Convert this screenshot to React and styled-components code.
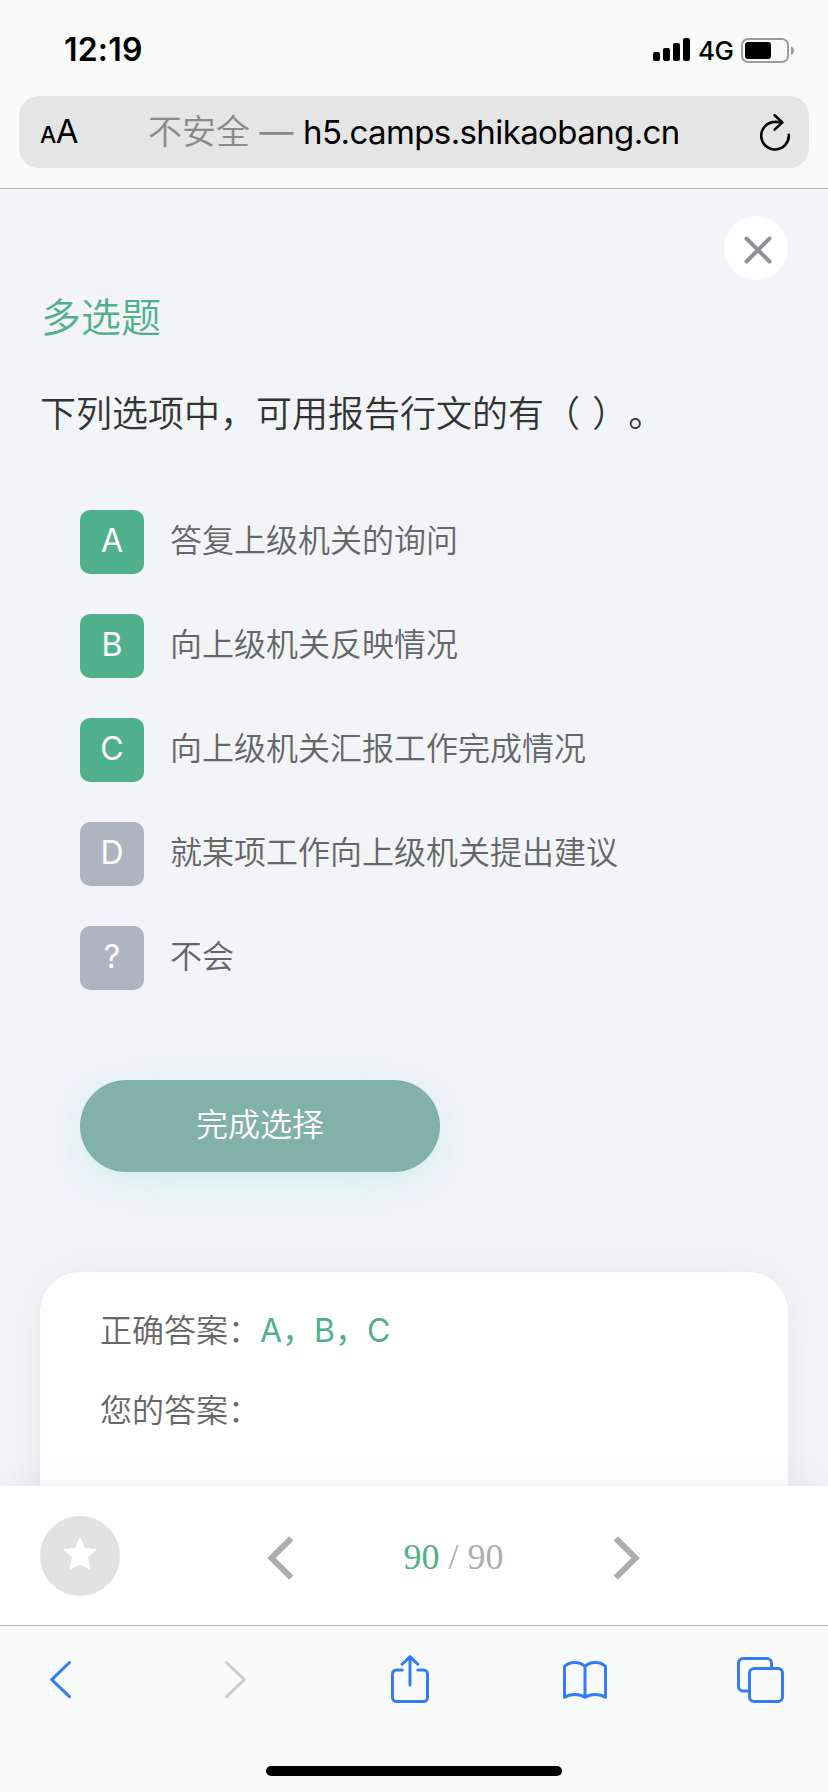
import React, { useState } from 'react'
import styled, { createGlobalStyle } from 'styled-components'

const green = '#51b08c'
const blue = '#347cf6'
const line = '#b0b1b2'

const OPTIONS = [
    { key: 'A', text: '答复上级机关的询问' },
    { key: 'B', text: '向上级机关反映情况' },
    { key: 'C', text: '向上级机关汇报工作完成情况' },
    { key: 'D', text: '就某项工作向上级机关提出建议' },
    { key: '?', text: '不会' },
]

const App = () => {
    const [selected, setSelected] = useState(['A', 'B', 'C'])

    const toggle = key =>
        setSelected(selected.includes(key) ? selected.filter(x => x !== key) : [...selected, key])

    return (
        <Screen>
            <GlobalStyle />
            <Header>
                <StatusBar>
                    <Clock>12:19</Clock>
                    <StatusIcons>
                        <Signal />
                        <Network>4G</Network>
                        <Battery />
                    </StatusIcons>
                </StatusBar>
                <AddressBar>
                    <TextSize><small>A</small>A</TextSize>
                    <Address>
                        <Insecure>不安全</Insecure>
                        <Dash>—</Dash>
                        <Domain>h5.camps.shikaobang.cn</Domain>
                    </Address>
                    <Reload />
                </AddressBar>
            </Header>

            <Content>
                <CloseButton aria-label="关闭">
                    <svg width="30" height="30" viewBox="0 0 30 30" fill="none" stroke="#8d9299" strokeWidth="4" strokeLinecap="round">
                        <path d="M3.5 3.5L26.5 26.5M26.5 3.5L3.5 26.5" />
                    </svg>
                </CloseButton>
                <Kind>多选题</Kind>
                <Question>下列选项中，可用报告行文的有（ ）。</Question>
                <Options>
                    {OPTIONS.map(x => (
                        <Option key={x.key} onClick={() => toggle(x.key)}>
                            <Letter $active={selected.includes(x.key)}>{x.key}</Letter>
                            <OptionText>{x.text}</OptionText>
                        </Option>
                    ))}
                </Options>
                <Submit>完成选择</Submit>
                <AnswerCard>
                    <Answer>正确答案：<b>A，B，C</b></Answer>
                    <Answer>您的答案：</Answer>
                </AnswerCard>
            </Content>

            <Pager>
                <Favorite aria-label="收藏">
                    <svg width="36" height="36" viewBox="0 0 36 36" fill="#fff" stroke="#fff" strokeWidth="1.6" strokeLinejoin="round">
                        <path d="M18 2.4L22.2 12.8L33.6 13.6L25 21L27.7 32.8L18 27.6L8.3 32.8L11 21L2.4 13.6L13.8 12.8Z" />
                    </svg>
                </Favorite>
                <Arrow aria-label="上一题"><PagerChevron d="M24.2 3.3L4.5 23L24.2 42.7" /></Arrow>
                <Counter><em>90</em> / 90</Counter>
                <Arrow aria-label="下一题"><PagerChevron d="M3.8 3.3L23.5 23L3.8 42.7" /></Arrow>
            </Pager>

            <Toolbar>
                <Tools>
                    <Tool><path d="M20.5 7.5L2.7 24.6L20.5 41.7" /></Tool>
                    <Tool $off><path d="M2.5 7.5L20.3 24.6L2.5 41.7" /></Tool>
                    <Tool>
                        <path d="M13.2 15H7.5a4 4 0 0 0-4 4V42.5a4 4 0 0 0 4 4h27a4 4 0 0 0 4-4V19a4 4 0 0 0-4-4h-5.7M21 30V2M13.2 9.2L21 1.6L28.8 9.2" />
                    </Tool>
                    <Tool>
                        <path d="M24 11.5C19 6.2 8.5 6.2 3.5 11.5V42.3C9 38.6 18.5 38.6 24 42.3C29.5 38.6 39 38.6 44.5 42.3V11.5C39.5 6.2 29 6.2 24 11.5V42" />
                    </Tool>
                    <Tool>
                        <path d="M12 36H7a4.5 4.5 0 0 1-4.5-4.5V8a4.5 4.5 0 0 1 4.5-4.5H31a4.5 4.5 0 0 1 4.5 4.5v4.5" />
                        <rect x="13.5" y="13.5" width="33" height="33" rx="4.5" />
                    </Tool>
                </Tools>
                <HomeIndicator />
            </Toolbar>
        </Screen>
    )
}

const Signal = () => (
    <svg width="37" height="24" viewBox="0 0 37 24">
        <rect x="0" y="14" width="7" height="9" rx="2" />
        <rect x="10" y="10" width="7" height="13" rx="2" />
        <rect x="20" y="5" width="7" height="18" rx="2" />
        <rect x="30" y="0" width="7" height="23" rx="2" />
    </svg>
)

const Battery = () => (
    <svg width="54" height="26" viewBox="0 0 54 26">
        <rect x="1" y="1" width="46" height="23" rx="6" fill="none" stroke="#9b9c9c" strokeWidth="2" />
        <rect x="4" y="4" width="26" height="17" rx="3" />
        <path d="M50 8.5C54 10 54 15.5 50 17Z" fill="#9b9c9c" />
    </svg>
)

const Reload = () => (
    <svg width="32" height="38" viewBox="0 0 32 38" fill="none" stroke="#000" strokeWidth="2.6" strokeLinecap="round" strokeLinejoin="round">
        <path d="M29.8 21.8A13.8 13.8 0 1 1 16 8.9Q19 8.8 23 9.4M15.6 2.2L23.4 9.4L15.6 16.6" />
    </svg>
)

const PagerChevron = ({ d }) => (
    <svg width="28" height="46" viewBox="0 0 28 46" fill="none" stroke="#adadad" strokeWidth="6">
        <path d={d} />
    </svg>
)

const GlobalStyle = createGlobalStyle`
    * {
        box-sizing: border-box;
    }

    body {
        margin: 0;
        font-family: Inter, 'Noto Sans CJK SC', sans-serif;
        text-spacing-trim: space-all;
    }

    button {
        border: 0;
        padding: 0;
        font: inherit;
    }

    svg {
        display: block;
        flex: none;
    }
`
const Screen = styled.div`
    display: flex;
    flex-direction: column;
    width: 828px;
    height: 1792px;
    overflow: hidden;
    background-color: #f2f4f8;
`
const Header = styled.header`
    flex: none;
    height: 189px;
    padding: 0 19px;
    background-color: #f9fbfa;
    border-bottom: 1px solid ${line};
`
const StatusBar = styled.div`
    display: flex;
    justify-content: space-between;
    height: 96px;
    padding: 0 14px 0 45px;
`
const Clock = styled.div`
    margin-top: 30px;
    font-size: 32px;
    line-height: 39px;
    font-weight: 600;
    letter-spacing: 0.2px;
`
const StatusIcons = styled.div`
    display: flex;
    align-items: flex-start;
    padding-top: 38px;
`
const Network = styled.span`
    width: 51px;
    padding-left: 8px;
    font-size: 26px;
    line-height: 25px;
    font-weight: 500;
    letter-spacing: -0.5px;
`
const AddressBar = styled.div`
    display: flex;
    align-items: center;
    height: 72px;
    padding: 0 18px 0 21px;
    border-radius: 20px;
    background-color: #e5e5e5;
`
const TextSize = styled.div`
    width: 108px;
    padding-top: 2px;
    font-size: 33px;
    line-height: 72px;
    letter-spacing: -0.5px;

    small {
        font-size: 23px;
        font-weight: 500;
    }
`
const Address = styled.div`
    display: flex;
    flex: 1;
    font-size: 34px;
    line-height: 72px;
    white-space: nowrap;
`
const Insecure = styled.span`
    color: #8a8a8a;
    font-weight: 350;
`
const Dash = styled.span`
    width: 53px;
    text-align: center;
    color: #8a8a8a;
`
const Domain = styled.span`
    font-size: 33px;
    letter-spacing: -0.6px;
`
const Content = styled.main`
    display: flex;
    flex-direction: column;
    align-items: flex-start;
    height: 1297px;
    padding: 27px 40px 0;
    overflow: hidden;
    font-weight: 350;
`
const CloseButton = styled.button`
    display: flex;
    flex: none;
    align-items: center;
    justify-content: center;
    align-self: flex-end;
    width: 64px;
    height: 64px;
    padding: 3px 0 0 4px;
    border-radius: 50%;
    background-color: #fff;
`
const Kind = styled.h1`
    margin: 8px 0 0 1px;
    font-size: 40px;
    line-height: 60px;
    font-weight: 350;
    color: ${green};
`
const Question = styled.p`
    margin: 39px 0 0;
    font-size: 36px;
    line-height: 54px;
    word-spacing: 2px;
    color: #333;
`
const Options = styled.ul`
    display: flex;
    flex-direction: column;
    gap: 40px;
    margin: 69px 0 0 40px;
    padding: 0;
    list-style: none;
`
const Option = styled.li`
    display: flex;
    align-items: center;
    height: 64px;
    cursor: pointer;
`
const Letter = styled.span`
    width: 64px;
    height: 64px;
    margin-right: 26px;
    border-radius: 10px;
    font-size: 32px;
    line-height: 61px;
    font-weight: 400;
    text-align: center;
    color: #fff;
    background-color: ${p => (p.$active ? green : '#afb5c0')};
`
const OptionText = styled.span`
    font-size: 32px;
    line-height: 62px;
    margin-bottom: 2px;
    color: #666;
`
const Submit = styled.button`
    flex: none;
    width: 360px;
    height: 92px;
    margin: 90px 0 0 40px;
    padding-bottom: 2px;
    border-radius: 46px;
    font-size: 32px;
    line-height: 88px;
    color: #fff;
    background-color: #82b2a7;
    box-shadow: 0 10px 44px rgba(120, 220, 190, 0.25);
`
const AnswerCard = styled.section`
    flex: none;
    width: 748px;
    height: 400px;
    margin-top: 100px;
    padding: 19px 60px;
    border-radius: 40px;
    background-color: #fff;
    box-shadow: 0 0 40px rgba(0, 0, 0, 0.06);
`
const Answer = styled.p`
    margin: 0;
    font-size: 32px;
    line-height: 80px;
    color: #666;

    b {
        font-weight: 400;
        color: ${green};
    }
`
const Pager = styled.nav`
    position: relative;
    display: flex;
    flex: none;
    align-items: center;
    height: 139px;
    padding-left: 40px;
    background-color: #fff;
    box-shadow: 0 0 40px rgba(0, 0, 0, 0.06);
`
const Favorite = styled.button`
    display: flex;
    align-items: center;
    justify-content: center;
    width: 80px;
    height: 80px;
    margin-right: 147px;
    padding-bottom: 3px;
    border-radius: 50%;
    background-color: #e2e2e2;
`
const Arrow = styled.button`
    width: 28px;
    margin-top: 5px;
    background: none;
`
const Counter = styled.div`
    width: 317px;
    padding-top: 2px;
    text-align: center;
    font-family: 'Liberation Serif', serif;
    font-size: 36px;
    line-height: 40px;
    color: #adadad;

    em {
        font-style: normal;
        color: ${green};
    }
`
const Toolbar = styled.footer`
    position: relative;
    display: flex;
    flex: none;
    flex-direction: column;
    justify-content: space-between;
    align-items: center;
    height: 167px;
    padding: 29px 0 16px;
    border-top: 1px solid ${line};
    background: linear-gradient(90deg, #fafafa, #f9fbfa 5%, #f9fbfa 70%, #fafafa);
`
const Tools = styled.div`
    display: grid;
    grid-template-columns: 175px 165px 172px 175px 48px;
    width: 100%;
    padding-left: 49px;
`
const Tool = styled.svg.attrs({ width: 48, height: 50, viewBox: '0 0 48 50' })`
    fill: none;
    stroke: ${p => (p.$off ? '#cdcdcd' : blue)};
    stroke-width: 3;
    stroke-linecap: round;
    stroke-linejoin: round;
`
const HomeIndicator = styled.div`
    width: 296px;
    height: 10px;
    border-radius: 5px;
    background-color: #000;
`

export default App
